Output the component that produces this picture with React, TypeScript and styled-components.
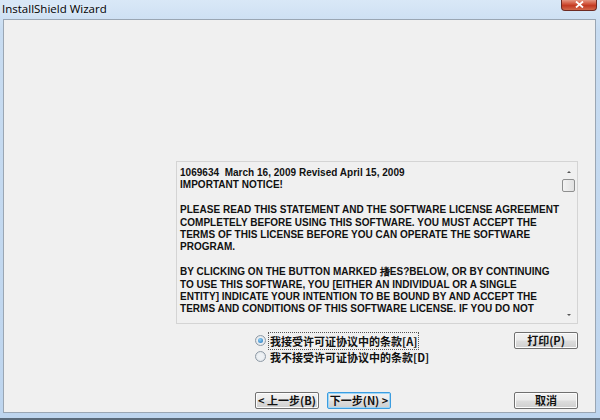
import styled, { createGlobalStyle } from 'styled-components';

const GlobalStyle = createGlobalStyle`
  html, body {
    margin: 0;
    padding: 0;
    background: #c9ddf1;
  }
  body {
    font-family: "Liberation Sans", Arial, sans-serif;
  }
`;

const Frame = styled.div`
  width: 600px;
  height: 420px;
  box-sizing: border-box;
  display: flex;
  flex-direction: column;
  background: linear-gradient(180deg, #d9e8f7 0px, #c8dcf1 30px, #bed5ee 100%);
  padding: 0 4px 5px 3px;
  overflow: hidden;
  border-bottom: 2px solid #5a6a7a;
`;

const TitleBar = styled.div`
  height: 19px;
  display: flex;
  align-items: flex-start;
  justify-content: space-between;
  flex-shrink: 0;
`;

const Title = styled.div`
  font-family: "Segoe UI", "Open Sans", "Noto Sans", sans-serif;
  font-size: 11.5px;
  color: #000;
  padding: 1px 0 0 0;
  margin-left: -1px;
  text-shadow: 0 0 6px rgba(255, 255, 255, 0.9);
`;

const CloseButton = styled.div`
  width: 34px;
  height: 11px;
  margin-top: -1px;
  margin-right: -1px;
  border: 1px solid #6d2a22;
  border-top: none;
  border-radius: 0 0 4px 4px;
  background: linear-gradient(180deg, #e9a794 0%, #d2543b 45%, #c23a22 60%, #d3694c 100%);
  display: flex;
  align-items: center;
  justify-content: center;
`;

const Client = styled.div`
  flex: 1;
  background: #f0f0f0;
  border: 1px solid #9aa6b3;
  display: flex;
  flex-direction: column;
  padding: 141px 17px 0 172px;
`;

const LicenseBox = styled.div`
  height: 163px;
  box-sizing: border-box;
  border: 1px solid #d4d4d4;
  background: #f0f0f0;
  display: flex;
`;

const LicenseText = styled.div`
  flex: 1;
  min-width: 0;
  padding: 5px 0 0 3px;
  font-size: 10px;
  font-weight: bold;
  line-height: 12.4px;
  color: #111;
  letter-spacing: 0.02px;
  white-space: pre;
`;

const ScrollBar = styled.div`
  width: 15px;
  flex-shrink: 0;
  margin: 2px 1px 2px 0;
  display: flex;
  flex-direction: column;
  align-items: center;
`;

const Arrow = styled.div<{ $down?: boolean }>`
  width: 0;
  height: 0;
  border-left: 2px solid transparent;
  border-right: 2px solid transparent;
  ${(p) => (p.$down ? 'border-top: 2px solid #555;' : 'border-bottom: 2px solid #555;')}
  margin: ${(p) => (p.$down ? '0 0 5px 0' : '7px 0 6px 0')};
`;

const Thumb = styled.div`
  width: 11px;
  height: 11px;
  border: 1px solid #8e8f8f;
  border-radius: 2px;
  background: linear-gradient(90deg, #f3f3f3, #e1e1e1);
`;

const ScrollTrack = styled.div`
  flex: 1;
`;

const OptionsRow = styled.div`
  display: flex;
  justify-content: space-between;
  margin-top: 8px;
  padding-left: 79px;
`;

const Options = styled.div`
  display: flex;
  flex-direction: column;
  gap: 3px;
  padding-top: 2px;
`;

const Option = styled.label`
  display: flex;
  align-items: center;
  gap: 3px;
  font-family: "Noto Sans CJK SC", "Liberation Sans", sans-serif;
  font-size: 11px;
  font-weight: bold;
  color: #111;
  height: 13px;
`;

const Radio = styled.span<{ $checked?: boolean }>`
  width: 9px;
  height: 9px;
  border-radius: 50%;
  border: 1px solid #8e9aa6;
  background: radial-gradient(circle, #eef1f4 40%, #d7dde3 100%);
  display: flex;
  align-items: center;
  justify-content: center;
  &::after {
    content: '';
    width: 5px;
    height: 5px;
    border-radius: 50%;
    background: ${(p) => (p.$checked ? 'radial-gradient(circle at 40% 35%, #8fd0f5, #1d6fb8)' : 'transparent')};
  }
`;

const OptionLabel = styled.span<{ $focused?: boolean }>`
  padding: 0 1px;
  outline: ${(p) => (p.$focused ? '1px dotted #555' : 'none')};
  letter-spacing: 0;
`;

const Button = styled.button<{ $default?: boolean }>`
  height: 17px;
  width: 64px;
  box-sizing: border-box;
  padding: 0;
  font-family: "Noto Sans CJK SC", "Liberation Sans", sans-serif;
  font-size: 11px;
  font-weight: bold;
  color: #111;
  border: 1px solid ${(p) => (p.$default ? '#3c9de0' : '#707070')};
  border-radius: 2px;
  background: linear-gradient(180deg, #f2f2f2 0%, #ebebeb 48%, #dddddd 52%, #cfcfcf 100%);
  box-shadow: inset 0 0 0 1px ${(p) => (p.$default ? '#9fd6f7' : '#fcfcfc')};
  display: flex;
  align-items: center;
  justify-content: center;
  line-height: 1;
`;

const PrintButton = styled(Button)`
  margin-top: 0;
`;

const Footer = styled.div`
  display: flex;
  margin-top: auto;
  margin-bottom: 3px;
  padding-left: 79px;
  gap: 8px;
`;

const Spacer = styled.div`
  flex: 1;
`;

const licenseText = `1069634  March 16, 2009 Revised April 15, 2009
IMPORTANT NOTICE!

PLEASE READ THIS STATEMENT AND THE SOFTWARE LICENSE AGREEMENT
COMPLETELY BEFORE USING THIS SOFTWARE. YOU MUST ACCEPT THE
TERMS OF THIS LICENSE BEFORE YOU CAN OPERATE THE SOFTWARE
PROGRAM.

BY CLICKING ON THE BUTTON MARKED 搘ES?BELOW, OR BY CONTINUING
TO USE THIS SOFTWARE, YOU [EITHER AN INDIVIDUAL OR A SINGLE
ENTITY] INDICATE YOUR INTENTION TO BE BOUND BY AND ACCEPT THE
TERMS AND CONDITIONS OF THIS SOFTWARE LICENSE. IF YOU DO NOT`;

export default function App() {
  return (
    <>
      <GlobalStyle />
      <Frame>
        <TitleBar>
          <Title>InstallShield Wizard</Title>
          <CloseButton>
            <svg width="9" height="7" viewBox="0 0 9 7">
              <path d="M1 0.5 L8 6.5 M8 0.5 L1 6.5" stroke="#fff" strokeWidth="1.8" />
            </svg>
          </CloseButton>
        </TitleBar>
        <Client>
          <LicenseBox>
            <LicenseText>{licenseText}</LicenseText>
            <ScrollBar>
              <Arrow />
              <Thumb />
              <ScrollTrack />
              <Arrow $down />
            </ScrollBar>
          </LicenseBox>
          <OptionsRow>
            <Options>
              <Option>
                <Radio $checked />
                <OptionLabel $focused>我接受许可证协议中的条款[A]</OptionLabel>
              </Option>
              <Option>
                <Radio />
                <OptionLabel>我不接受许可证协议中的条款[D]</OptionLabel>
              </Option>
            </Options>
            <PrintButton>打印(P)</PrintButton>
          </OptionsRow>
          <Footer>
            <Button>&lt; 上一步(B)</Button>
            <Button $default>下一步(N) &gt;</Button>
            <Spacer />
            <Button>取消</Button>
          </Footer>
        </Client>
      </Frame>
    </>
  );
}
